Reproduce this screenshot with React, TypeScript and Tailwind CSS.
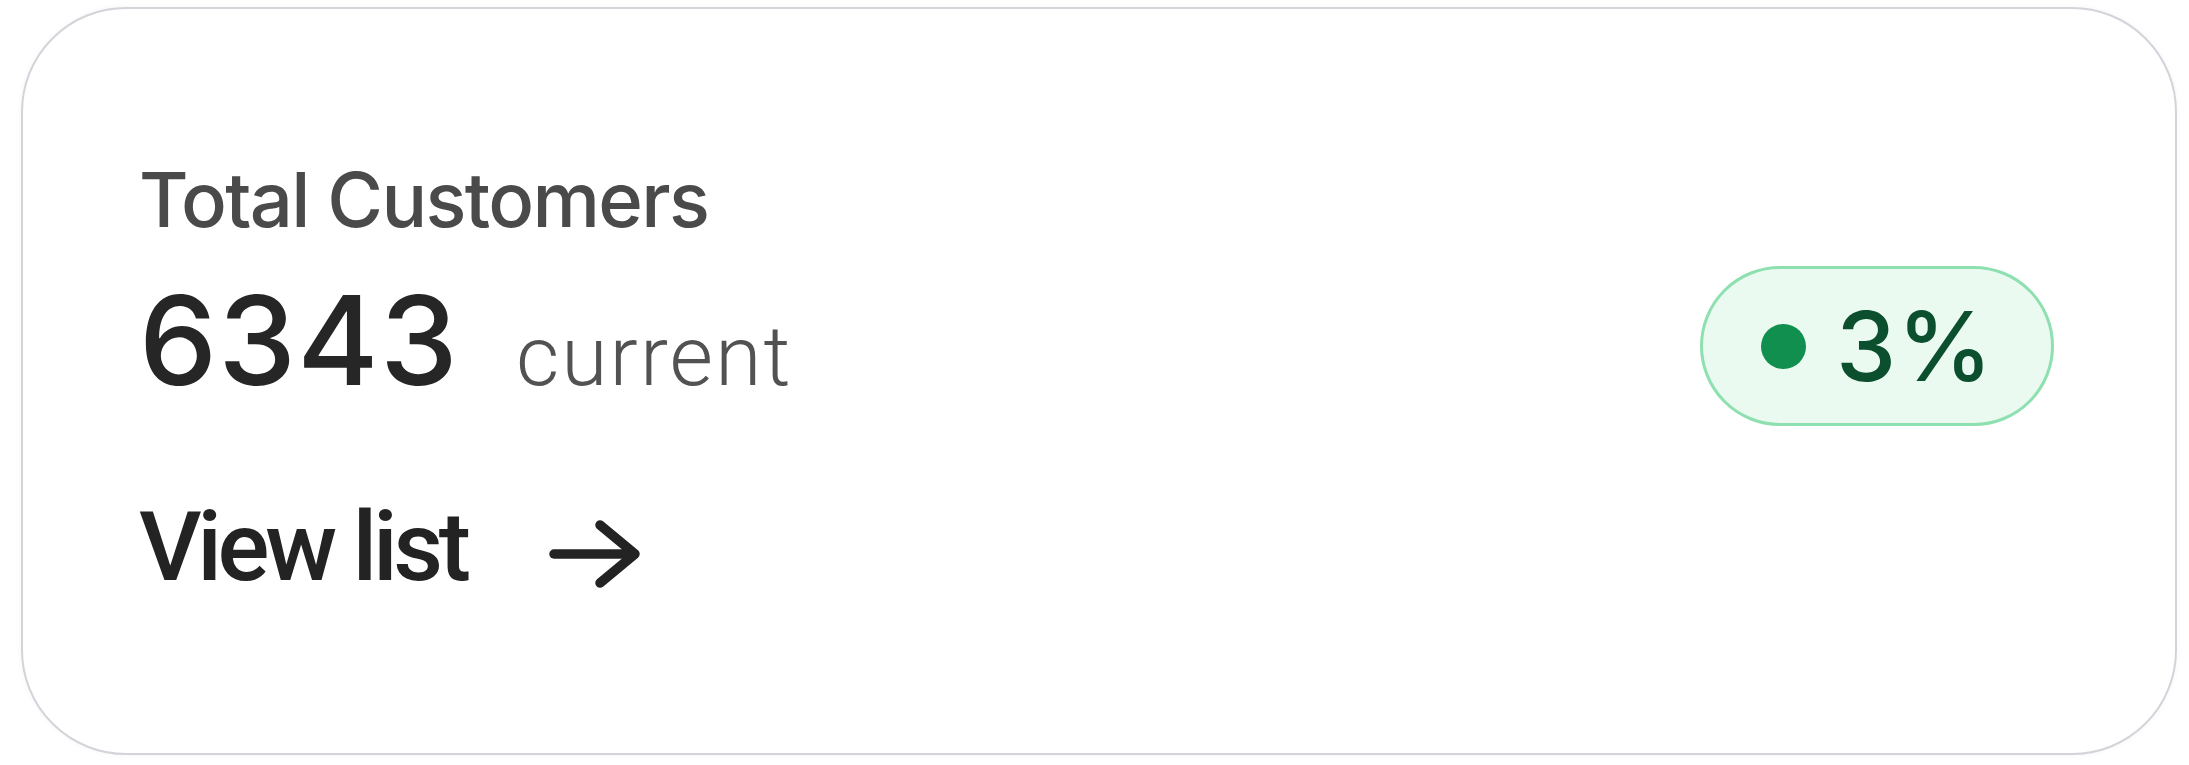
function TrendBadge({ value }: { value: string }) {
  return (
    <div className="mt-[257px] flex h-[160px] w-[354px] items-center rounded-full border-[3px] border-[#8ee0b0] bg-[#eafaf0] pl-[58px]">
      <span className="h-[45px] w-[45px] shrink-0 rounded-full bg-[#108f4f]" />
      <span className="ml-[30px] font-['Inter',sans-serif] text-[96px] font-medium leading-none tracking-[0.01em] text-[#0c4f2f]">
        {value}
      </span>
    </div>
  );
}

export default function App() {
  return (
    <div className="min-h-screen bg-white pl-[21px] pt-[7px]">
      <div className="flex h-[748px] w-[2156px] items-start justify-between rounded-[105px] border-2 border-[#d2d4da] bg-white pl-[116px] pr-[121px] shadow-[0_0_6px_rgba(0,0,0,0.04)]">
        <div className="flex flex-col pt-[152px]">
          <h3 className="font-['Inter',sans-serif] text-[76px] font-medium leading-none tracking-[-0.022em] text-[#4a4a4a]">
            Total Customers
          </h3>

          <div className="mt-[41px] flex items-baseline">
            <span className="font-['Inter',sans-serif] text-[124px] font-medium leading-none tracking-[0.01em] text-[#262626]">
              6343
            </span>
            <span className="ml-[57px] font-['Roboto',sans-serif] text-[84px] font-light leading-none tracking-[0.025em] text-[#525252]">
              current
            </span>
          </div>

          <a href="#" className="mt-[97px] flex items-start text-[#232323]">
            <span className="font-['Roboto',sans-serif] text-[97px] font-medium leading-none tracking-[-0.045em]">
              View list
            </span>
            <svg
              width="94"
              height="72"
              viewBox="0 0 94 72"
              fill="none"
              stroke="currentColor"
              strokeWidth="9.5"
              strokeLinecap="round"
              strokeLinejoin="round"
              className="ml-[81px] mt-[19px]"
            >
              <path d="M6 36h80" />
              <path d="M52 7l35 29-35 29" />
            </svg>
          </a>
        </div>

        <TrendBadge value="3%" />
      </div>
    </div>
  );
}
